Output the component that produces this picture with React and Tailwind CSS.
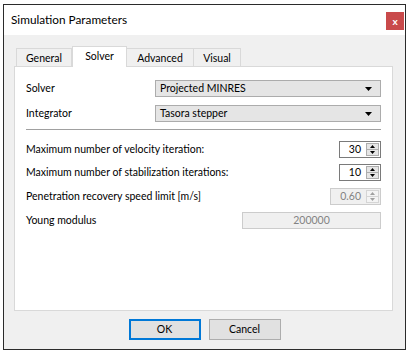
import React from 'react';

const font = { fontFamily: 'Lato, "Noto Sans", sans-serif' };

const ComboBox = ({ value }) => (
  <div className="w-[226px] h-[17px] bg-[#e5e5e5] border border-[#acacac] flex items-center justify-between pl-[4px] pr-[8px]">
    <span className="leading-none">{value}</span>
    <svg width="7" height="4" viewBox="0 0 7 4">
      <path d="M0 0 H7 L3.5 4 Z" fill="#000" />
    </svg>
  </div>
);

const SpinBox = ({ value, width, disabled }) => (
  <div
    className={
      'h-[17px] flex items-stretch border ' +
      (disabled ? 'border-[#cccccc] bg-[#f0f0f0] text-[#838383]' : 'border-[#7a7a7a] bg-white text-black')
    }
    style={{ width }}
  >
    <div className="flex-1 flex items-center justify-end pr-[5px] leading-none">{value}</div>
    <div className="w-[13px] flex flex-col my-[1px] mr-[1px]">
      <div className={'flex-1 flex items-center justify-center border border-b-0 ' + (disabled ? 'border-[#d5d5d5] bg-[#f4f4f4]' : 'border-[#adadad] bg-[#e5e5e5]')}>
        <svg width="5" height="3" viewBox="0 0 5 3">
          <path d="M0 3 H5 L2.5 0 Z" fill={disabled ? '#a0a0a0' : '#000'} />
        </svg>
      </div>
      <div className={'flex-1 flex items-center justify-center border ' + (disabled ? 'border-[#d5d5d5] bg-[#f4f4f4]' : 'border-[#adadad] bg-[#e5e5e5]')}>
        <svg width="5" height="3" viewBox="0 0 5 3">
          <path d="M0 0 H5 L2.5 3 Z" fill={disabled ? '#a0a0a0' : '#000'} />
        </svg>
      </div>
    </div>
  </div>
);

const App = () => {
  const tabs = ['General', 'Solver', 'Advanced', 'Visual'];
  const tabWidths = [56, 55, 68, 48];

  return (
    <div className="w-[411px] h-[354px] bg-white pt-[4px] pl-[3px] text-[10.5px] text-black" style={font}>
      <div className="w-[403px] h-[346px] border border-[#2b2b2b] bg-[#f0f0f0] flex flex-col">
        {/* title bar */}
        <div className="h-[30px] bg-white flex items-start justify-between pr-[1px]">
          <span className="pl-[7px] pt-[9px] text-[11.8px] leading-none">Simulation Parameters</span>
          <div className="mt-[7px] w-[18px] h-[18px] bg-[#c94a4b] flex items-center justify-center text-white text-[10px] font-bold leading-none">
            x
          </div>
        </div>

        <div className="pl-[10px] pt-[11px]">
          {/* tabs */}
          <div className="flex items-end h-[20px] pl-[2px] relative z-10">
            {tabs.map((t, i) =>
              t === 'Solver' ? (
                <div
                  key={t}
                  className="h-[21px] -mb-[1px] bg-white border border-b-0 border-[#d9d9d9] flex items-start justify-center pt-[4px] leading-none"
                  style={{ width: tabWidths[i] }}
                >
                  {t}
                </div>
              ) : (
                <div
                  key={t}
                  className="h-[18px] bg-[#f0f0f0] border border-b-0 border-[#d9d9d9] -ml-[1px] first:ml-0 flex items-center justify-center pt-[1px] leading-none"
                  style={{ width: tabWidths[i] }}
                >
                  {t}
                </div>
              )
            )}
          </div>

          {/* pane */}
          <div className="w-[379px] h-[245px] bg-white border border-[#d9d9d9] px-[11px] pt-[13px]">
            <div className="flex items-center justify-between h-[17px]">
              <span>Solver</span>
              <ComboBox value="Projected MINRES" />
            </div>
            <div className="flex items-center justify-between h-[17px] mt-[8px]">
              <span>Integrator</span>
              <ComboBox value="Tasora stepper" />
            </div>
            <div className="mt-[7px] border-t border-[#a0a0a0]" />

            <div className="flex items-center justify-between h-[17px] mt-[11px]">
              <span>Maximum number of velocity iteration:</span>
              <SpinBox value="30" width={42} />
            </div>
            <div className="flex items-center justify-between h-[17px] mt-[6px]">
              <span>Maximum number of stabilization iterations:</span>
              <SpinBox value="10" width={42} />
            </div>
            <div className="flex items-center justify-between h-[17px] mt-[7px]">
              <span>Penetration recovery speed limit [m/s]</span>
              <SpinBox value="0.60" width={51} disabled />
            </div>
            <div className="flex items-center justify-between h-[17px] mt-[7px]">
              <span>Young modulus</span>
              <div className="w-[139px] h-[17px] border border-[#cccccc] bg-[#f0f0f0] text-[#838383] flex items-center justify-center leading-none">
                200000
              </div>
            </div>
          </div>
        </div>

        {/* buttons */}
        <div className="flex justify-center gap-[8px] mt-[8px]">
          <button className="w-[72px] h-[21px] bg-[#e1e1e1] border-2 border-[#0078d7] leading-none">OK</button>
          <button className="w-[72px] h-[21px] bg-[#e1e1e1] border border-[#adadad] leading-none">Cancel</button>
        </div>
      </div>
    </div>
  );
};

export default App;
